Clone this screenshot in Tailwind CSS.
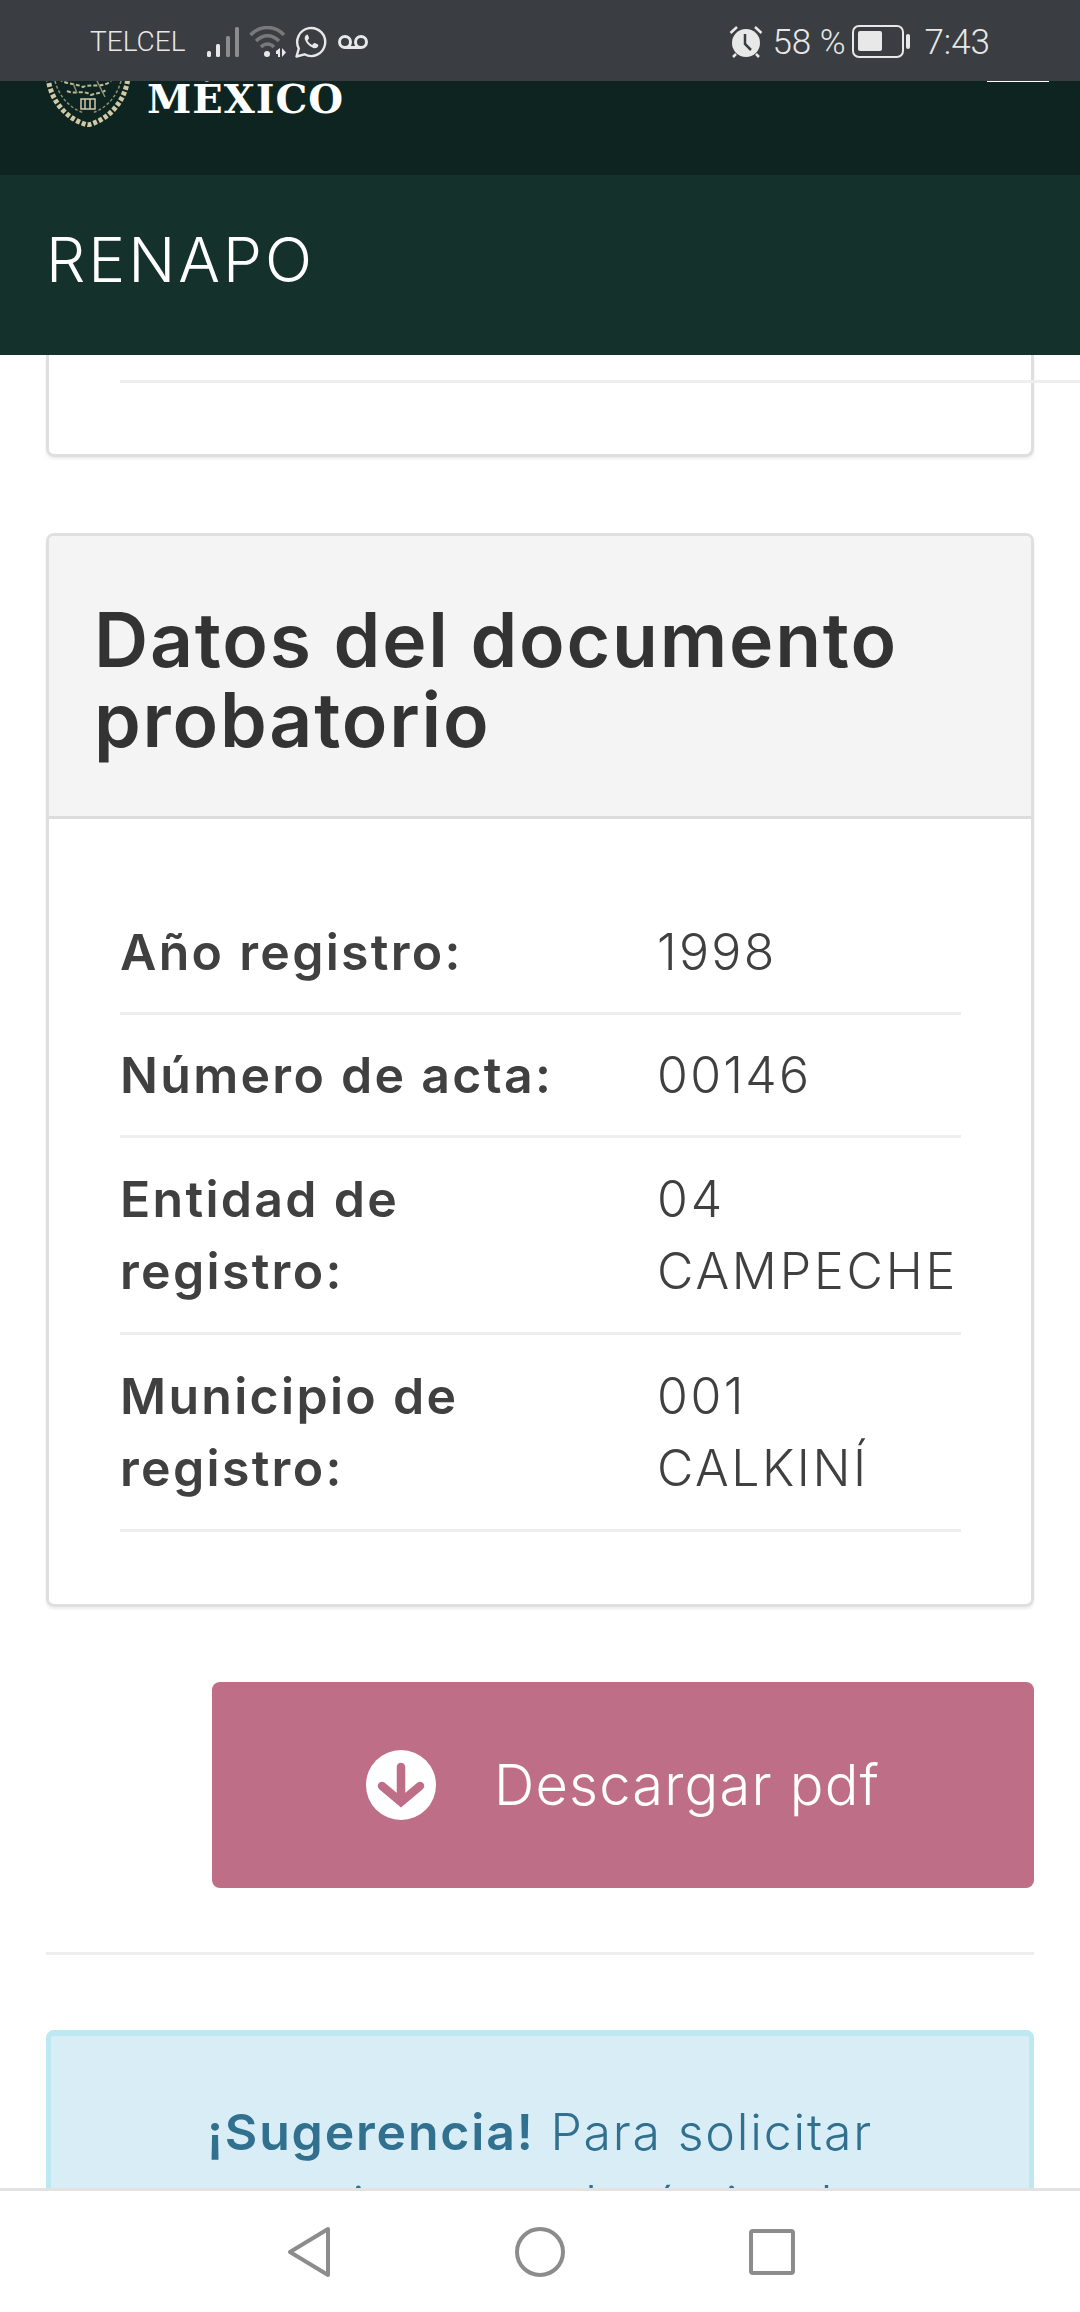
<!DOCTYPE html>
<html lang="es">
<head>
<meta charset="utf-8">
<script src="https://cdn.jsdelivr.net/npm/@tailwindcss/browser@4"></script>
<title>RENAPO</title>
</head>
<body class="m-0 bg-white">
<div class="flex flex-col w-[1080px] h-[2312px] overflow-hidden font-['Inter',sans-serif] text-[#333]">
  <!-- status bar -->
  <div class="h-[81px] shrink-0 bg-[#3a3d41] flex items-center justify-between text-[#e8e8e8] pl-[90px] pr-[90px] pt-[3px] font-['Roboto',sans-serif] relative z-10">
    <div class="flex items-center">
      <span class="text-[28px] font-light w-[117px]">TELCEL</span>
      <svg class="w-[32px] h-[31px]" viewBox="0 0 32 31"><rect x="0" y="24" width="4" height="6" rx="1.5" fill="#e8e8e8"/><rect x="9" y="17" width="4" height="13" rx="1.5" fill="#e8e8e8"/><rect x="19" y="9" width="4" height="21" rx="1.5" fill="#8a8c8e"/><rect x="28" y="0" width="4" height="30" rx="1.5" fill="#8a8c8e"/></svg>
      <svg class="w-[38px] h-[32px] ml-[10px]" viewBox="0 0 38 32" fill="none"><path d="M1.500 9C11 -1 26 -1 35 9" stroke="#77797b" stroke-width="3.500"/><path d="M7 15C14 8 23 8 30 15" stroke="#77797b" stroke-width="3.500"/><path d="M12 21C16 17 21 17 25 21" stroke="#77797b" stroke-width="3.500"/><circle cx="18" cy="28" r="3" fill="#e8e8e8"/><path d="M27 25l4 -3v9h-2v-3h-2zM33 22l4 4.500 -4 4.500z" fill="#e8e8e8"/></svg>
      <svg class="w-[32px] h-[32px] ml-[8px]" viewBox="0 0 32 32" fill="none"><path d="M1.500 30.500l2.300 -8A14 14 0 1 1 9.500 28.300z" stroke="#e8e8e8" stroke-width="2.400" stroke-linejoin="round"/><path d="M11.800 8.800c-1.800.8-2.600 2.800-1.800 5 1.500 3.800 4.400 6.700 8.300 8.100 2.200.7 4.200-.2 4.900-2 .3-.8 0-1.300-.7-1.600l-2.600-1.200c-.6-.3-1-.1-1.400.4l-.8 1c-.3.300-.6.400-1 .2-1.700-.8-3.200-2.200-4-3.900-.2-.4-.1-.7.200-1l.8-.9c.4-.4.400-.8.200-1.300l-1-2.500c-.3-.6-.8-.8-1.100-.3z" fill="#e8e8e8"/></svg>
      <svg class="w-[32px] h-[16px] ml-[10px]" viewBox="0 0 32 16" fill="none" stroke="#e8e8e8" stroke-width="3"><circle cx="8" cy="8" r="5.500"/><circle cx="24" cy="8" r="5.500"/><path d="M8 13.500h16"/></svg>
    </div>
    <div class="flex items-center">
      <svg class="w-[34px] h-[34px]" viewBox="0 0 34 34"><circle cx="17" cy="18" r="14" fill="#e8e8e8"/><path d="M16 9v10l6 6" stroke="#3a3d41" stroke-width="2.500" fill="none"/><path d="M1.500 8L8 2M32.500 8L26 2M4 32l3 -3M30 32l-3 -3" stroke="#e8e8e8" stroke-width="2.500"/></svg>
      <span class="text-[35px] font-light ml-[9px] w-[80px] whitespace-nowrap leading-none">58 %</span>
      <svg class="w-[60px] h-[34px]" viewBox="0 0 60 34" fill="none"><rect x="1" y="1" width="50" height="31" rx="6" stroke="#e8e8e8" stroke-width="2"/><rect x="6" y="6" width="24" height="20" rx="2" fill="#e8e8e8"/><rect x="54" y="9" width="4" height="15" rx="2" fill="#e8e8e8"/></svg>
      <span class="text-[35px] font-light ml-[12px] leading-none">7:43</span>
    </div>
  </div>
  <!-- government header, scrolled under the status bar -->
  <div class="h-[94px] shrink-0 bg-[#0e2420] relative overflow-hidden">
    <svg class="absolute left-[45px] top-[-22px] w-[86px] h-[68px]" viewBox="0 0 86 68" fill="none">
      <path d="M3 18C5 40 20 60 43 66C66 60 81 40 83 18" stroke="#cfc9a6" stroke-width="5" stroke-dasharray="4 2"/>
      <path d="M10 22C14 38 26 50 39 54M76 22C72 38 60 50 47 54" stroke="#8f8b72" stroke-width="1.500" stroke-dasharray="3 2"/>
      <path d="M14 20C22 26 30 24 38 28C46 24 56 30 66 22M22 32C30 36 38 30 46 36C52 34 58 34 62 30" stroke="#bdb898" stroke-width="2" stroke-dasharray="4 2"/>
      <path d="M36 40h14v10H36zM40 40v10M45 40v10" stroke="#cfc9a6" stroke-width="1.500"/>
      <path d="M28 24L32 34M52 22L60 38" stroke="#8f8b72" stroke-width="1.500"/>
    </svg>
    <span class="absolute left-[147px] top-[-4px] text-[40px] leading-[44px] font-bold tracking-[1px] text-white font-['DejaVu_Serif',serif]">MÉXICO</span>
    <div class="absolute left-[987px] top-0 w-[62px] h-[1px] bg-white"></div>
  </div>
  <!-- RENAPO bar -->
  <div class="h-[180px] shrink-0 bg-[#15312b] flex items-center pl-[46px] pb-[10px] text-white">
    <span class="text-[62px] font-light leading-none tracking-[3px]">RENAPO</span>
  </div>
  <!-- content -->
  <main class="flex-1 min-h-0 overflow-hidden relative px-[46px]">
    <!-- bottom of previous card -->
    <div class="h-[102px] border-[3px] border-t-0 border-[#dfdfdf] rounded-b-[8px] shadow-[0_2px_3px_rgba(0,0,0,0.08)] relative">
      <div class="absolute left-[71px] top-[25px] w-[1000px] h-[3px] bg-[#eeeeee]"></div>
    </div>
    <!-- document card -->
    <section class="mt-[76px] border-[3px] border-[#dfdfdf] rounded-[8px] shadow-[0_2px_3px_rgba(0,0,0,0.08)] overflow-hidden">
      <div class="h-[283px] bg-[#f4f4f4] border-b-[3px] border-[#dcdcdc] pt-[64px] pl-[45px] pr-[30px]">
        <h2 class="text-[75px] leading-[80px] font-semibold text-[#333] tracking-[1.800px] m-0">Datos del documento probatorio</h2>
      </div>
      <div class="pt-[73px] pb-[72px] pl-[71px] pr-[70px] text-[#404040]">
        <div class="grid grid-cols-[537px_1fr] border-b-[3px] border-[#eeeeee] h-[123px] items-center text-[50px] leading-[72px] tracking-[2.300px]">
          <div class="font-semibold">Año registro:</div><div class="font-light tracking-[2.300px]">1998</div>
        </div>
        <div class="grid grid-cols-[537px_1fr] border-b-[3px] border-[#eeeeee] h-[123px] items-center text-[50px] leading-[72px] tracking-[2.300px]">
          <div class="font-semibold">Número de acta:</div><div class="font-light tracking-[2.300px]">00146</div>
        </div>
        <div class="grid grid-cols-[537px_1fr] border-b-[3px] border-[#eeeeee] h-[197px] items-center text-[50px] leading-[72px] tracking-[2.300px]">
          <div class="font-semibold">Entidad de<br>registro:</div><div class="font-light tracking-[2.800px]">04<br>CAMPECHE</div>
        </div>
        <div class="grid grid-cols-[537px_1fr] border-b-[3px] border-[#eeeeee] h-[197px] items-center text-[50px] leading-[72px] tracking-[2.300px]">
          <div class="font-semibold">Municipio de<br>registro:</div><div class="font-light tracking-[2.500px]">001<br>CALKINÍ</div>
        </div>
      </div>
    </section>
    <!-- download -->
    <div class="mt-[75px] ml-[166px] h-[206px] w-[822px] bg-[#bf6e87] rounded-[8px] flex items-center justify-center text-white">
      <svg class="w-[70px] h-[70px] shrink-0" viewBox="0 0 70 70"><circle cx="35" cy="35" r="35" fill="#fff"/><path d="M35 17V50M16 36L35 52L54 36" stroke="#bf6e87" stroke-width="8.500" fill="none" stroke-linecap="round"/></svg>
      <span class="ml-[58px] text-[56px] font-light leading-none tracking-[1.200px]">Descargar pdf</span>
    </div>
    <div class="mt-[64px] h-[3px] w-[988px] bg-[#eeeeee]"></div>
    <!-- suggestion -->
    <div class="mt-[75px] h-[400px] bg-[#d9edf7] border-[5px] border-t-[6px] border-[#bce8f1] rounded-[8px] pt-[60px] text-center text-[#31708f] text-[50px] leading-[72px] font-light tracking-[1.800px] px-[10px]">
      <strong class="font-semibold">¡Sugerencia!</strong> Para solicitar<br>una cita para el trámite de
    </div>
  </main>
  <!-- nav bar -->
  <nav class="h-[124px] shrink-0 border-t-[3px] border-[#e2e2e2] bg-white flex items-center justify-center gap-[184px] relative z-10">
    <svg class="w-[46px] h-[52px]" viewBox="0 0 46 52" fill="none"><path d="M43 3L5 26L43 49z" stroke="#8c8c8c" stroke-width="4" stroke-linejoin="round"/></svg>
    <svg class="w-[50px] h-[50px]" viewBox="0 0 50 50" fill="none"><circle cx="25" cy="25" r="23" stroke="#8c8c8c" stroke-width="4"/></svg>
    <svg class="w-[46px] h-[46px]" viewBox="0 0 46 46" fill="none"><rect x="2" y="2" width="42" height="42" rx="2" stroke="#8c8c8c" stroke-width="4"/></svg>
  </nav>
</div>
</body>
</html>
